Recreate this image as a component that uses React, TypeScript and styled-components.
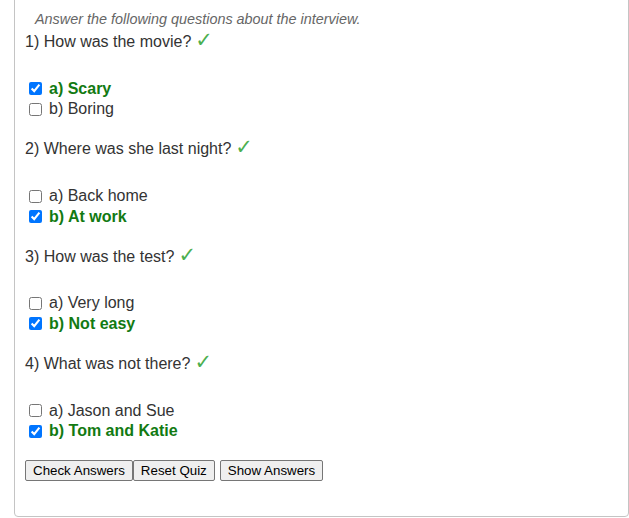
import React from "react";
import styled, { createGlobalStyle } from "styled-components";

const Global = createGlobalStyle`
  html, body { margin: 0; padding: 0; background: #fff; }
  body { font-family: Arial, "Liberation Sans", sans-serif; overflow: hidden; }
`;

const Panel = styled.div`
  box-sizing: border-box;
  width: 615px;
  margin: -10px 0 0 14px;
  padding: 20px 10px 35px 10px;
  border: 1px solid #c4c4c4;
  border-radius: 4px;
  color: #333;
`;

const Instruction = styled.p`
  margin: 0 0 6px 0;
  padding-left: 10px;
  font-size: 14.4px;
  line-height: 16px;
  font-style: italic;
  color: #666;
`;

const Quiz = styled.div`
  display: flex;
  flex-direction: column;
  gap: 20.8px;
`;

const Block = styled.div`
  display: flex;
  flex-direction: column;
`;

const Question = styled.div`
  font-size: 16px;
  line-height: 18px;
  height: 18px;
  margin-bottom: 27.5px;
`;

const Tick = styled.span`
  color: #4caf50;
  font-family: "DejaVu Sans", sans-serif;
  font-size: 21px;
  line-height: 0;
  margin-left: 4px;
`;

const Option = styled.label<{ $correct: boolean }>`
  display: flex;
  align-items: center;
  height: 20.5px;
  font-size: 16px;
  line-height: 18px;
  color: ${(p) => (p.$correct ? "#127a12" : "#333")};
  font-weight: ${(p) => (p.$correct ? 700 : 400)};
`;

const Box = styled.input`
  width: 13px;
  height: 13px;
  margin: 0 7px 0 4px;
`;

const ButtonRow = styled.div`
  display: flex;
  margin-top: 19px;
`;

const Btn = styled.button<{ $gap?: boolean }>`
  font-family: Arial, "Liberation Sans", sans-serif;
  font-size: 13.33px;
  height: 21px;
  padding: 1px 7px;
  margin-left: ${(p) => (p.$gap ? "5px" : "0")};
  border: 1px solid #767676;
  border-radius: 2px;
  background: #efefef;
  color: #000;
`;

const data = [
  { q: "1) How was the movie?", opts: ["a) Scary", "b) Boring"], ans: 0 },
  { q: "2) Where was she last night?", opts: ["a) Back home", "b) At work"], ans: 1 },
  { q: "3) How was the test?", opts: ["a) Very long", "b) Not easy"], ans: 1 },
  { q: "4) What was not there?", opts: ["a) Jason and Sue", "b) Tom and Katie"], ans: 1 },
];

export default function App() {
  return (
    <>
      <Global />
      <Panel>
        <Instruction>Answer the following questions about the interview.</Instruction>
        <Quiz>
          {data.map((d) => (
            <Block key={d.q}>
              <Question>
                {d.q}
                <Tick>✓</Tick>
              </Question>
              {d.opts.map((o, i) => (
                <Option key={o} $correct={i === d.ans}>
                  <Box type="checkbox" defaultChecked={i === d.ans} />
                  {o}
                </Option>
              ))}
            </Block>
          ))}
        </Quiz>
        <ButtonRow>
          <Btn>Check Answers</Btn>
          <Btn>Reset Quiz</Btn>
          <Btn $gap>Show Answers</Btn>
        </ButtonRow>
      </Panel>
    </>
  );
}
